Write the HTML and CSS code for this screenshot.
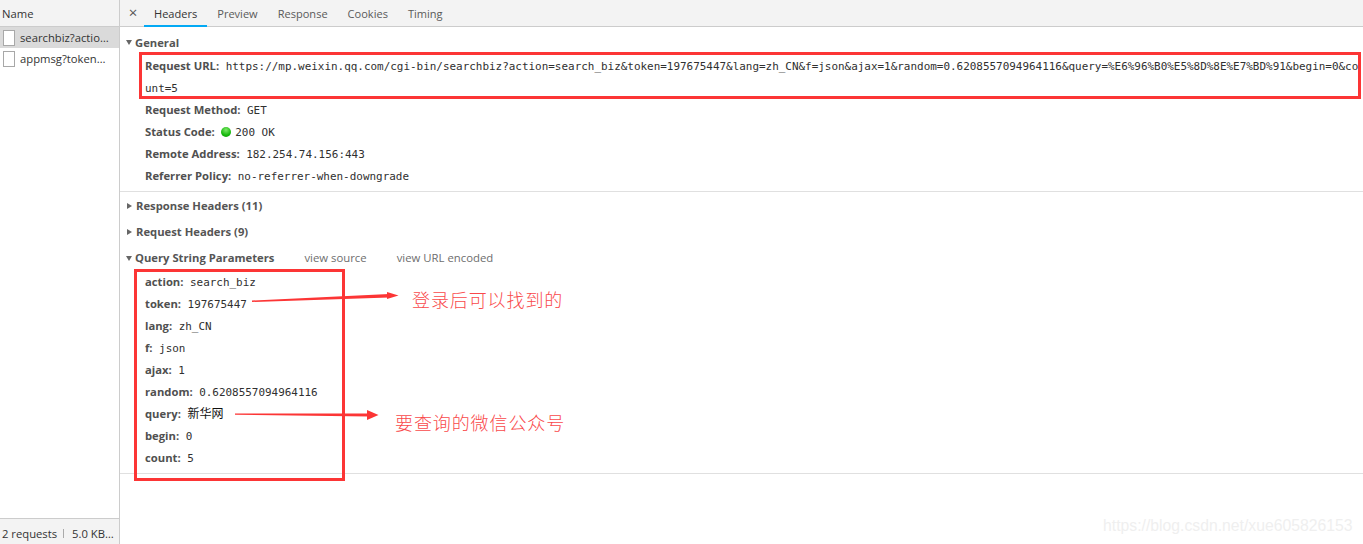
FILE: index.html
```html
<!DOCTYPE html>
<html lang="en">
<head>
<meta charset="utf-8">
<title>Network</title>
<link rel="stylesheet" href="styles.css">
</head>
<body>
<div class="app">
  <aside class="side">
    <div class="side-head">Name</div>
    <ul class="reqs">
      <li class="req sel"><span class="file"></span><span class="req-name">searchbiz?action=search_biz</span></li>
      <li class="req"><span class="file"></span><span class="req-name">appmsg?token=197675447</span></li>
    </ul>
    <div class="side-foot"><span class="foot-a">2 requests</span><span class="foot-sep"></span><span class="foot-b">5.0 KB transferred</span></div>
  </aside>
  <main class="main">
    <nav class="tabs">
      <span class="close">×</span>
      <span class="tab on">Headers</span>
      <span class="tab">Preview</span>
      <span class="tab">Response</span>
      <span class="tab">Cookies</span>
      <span class="tab">Timing</span>
    </nav>
    <section class="sec sec-general">
      <div class="sec-title"><span class="tri down"></span>General</div>
      <div class="row wrap"><b>Request URL:</b><span class="val">https://mp.weixin.qq.com/cgi-bin/searchbiz?action=search_biz&amp;token=197675447&amp;lang=zh_CN&amp;f=json&amp;ajax=1&amp;random=0.6208557094964116&amp;query=%E6%96%B0%E5%8D%8E%E7%BD%91&amp;begin=0&amp;count=5</span></div>
      <div class="row"><b>Request Method:</b><span class="val">GET</span></div>
      <div class="row"><b>Status Code:</b><span class="dot"></span><span class="val tight">200 OK</span></div>
      <div class="row"><b>Remote Address:</b><span class="val">182.254.74.156:443</span></div>
      <div class="row"><b>Referrer Policy:</b><span class="val">no-referrer-when-downgrade</span></div>
    </section>
    <section class="sec sec-query">
      <div class="sec-title tall"><span class="tri right"></span>Response Headers (11)</div>
      <div class="sec-title tall"><span class="tri right"></span>Request Headers (9)</div>
      <div class="sec-title tall"><span class="tri down"></span>Query String Parameters<span class="lnk">view source</span><span class="lnk">view URL encoded</span></div>
      <div class="row"><b>action:</b><span class="val">search_biz</span></div>
      <div class="row"><b>token:</b><span class="val">197675447</span></div>
      <div class="row"><b>lang:</b><span class="val">zh_CN</span></div>
      <div class="row"><b>f:</b><span class="val">json</span></div>
      <div class="row"><b>ajax:</b><span class="val">1</span></div>
      <div class="row"><b>random:</b><span class="val">0.6208557094964116</span></div>
      <div class="row"><b>query:</b><span class="val cjk" lang="zh-CN">新华网</span></div>
      <div class="row"><b>begin:</b><span class="val">0</span></div>
      <div class="row"><b>count:</b><span class="val">5</span></div>
    </section>
  </main>
</div>
<div class="mark box-url"></div>
<div class="mark box-params"></div>
<svg class="arrows" width="1363" height="544" viewBox="0 0 1363 544" aria-hidden="true">
  <path class="shaft" d="M252 300.5 L389 294 L389 297.5 L252 302 Z"/>
  <path class="head" d="M387 292 L398.5 295.5 L387 299 Z"/>
  <path class="shaft" d="M235 413.5 L369 413.5 L369 416.5 L235 414.8 Z"/>
  <path class="head" d="M367 410 L378.5 415 L367 420 Z"/>
</svg>
<div class="note note-a" lang="zh-CN">登录后可以找到的</div>
<div class="note note-b" lang="zh-CN">要查询的微信公众号</div>
<div class="watermark">https://blog.csdn.net/xue605826153</div>
</body>
</html>
```

FILE: styles.css
```css
* { box-sizing: border-box; }
html, body { margin: 0; height: 100%; background: #fff; overflow: hidden; }
body { font-family: "Open Sans", "Noto Sans", sans-serif; font-size: 11.25px; color: #303030; }
.app { display: flex; height: 544px; }
.side { width: 120px; flex: none; border-right: 1px solid #ccc; display: flex; flex-direction: column; }
.side-head { height: 27px; line-height: 27px; padding-left: 2px; background: #f3f3f3; border-bottom: 1px solid #ccc; color: #333; }
.reqs { list-style: none; margin: 0; padding: 0; flex: 1; }
.req { height: 21px; display: flex; align-items: center; padding: 0 8px 0 3px; }
.req.sel { background: #dadada; }
.file { width: 12px; height: 16px; flex: none; background: #fff; border: 1px solid #a8a8a8; margin-right: 5px; }
.req-name { white-space: nowrap; overflow: hidden; text-overflow: ellipsis; min-width: 0; color: #333; }
.side-foot { height: 26px; flex: none; display: flex; align-items: center; padding: 3px 4px 0 2px; background: #f3f3f3; border-top: 1px solid #ccc; white-space: nowrap; color: #333; }
.foot-a { flex: none; }
.foot-sep { width: 1px; height: 9px; flex: none; background: #aaa; margin: 0 8px 0 6px; }
.foot-b { overflow: hidden; text-overflow: ellipsis; min-width: 0; }
.main { flex: 1; min-width: 0; display: flex; flex-direction: column; }
.tabs { height: 27px; flex: none; display: flex; align-items: stretch; background: #f3f3f3; border-bottom: 1px solid #ccc; padding-left: 6px; color: #5a5a5a; font-size: 11.05px; }
.close { width: 14px; margin-right: 4px; text-align: center; font-size: 15px; line-height: 25px; color: #555; }
.tab { padding: 0 10px; line-height: 28px; }
.tab.on { color: #333; box-shadow: inset 0 -2px 0 #03a9f4; height: 27px; }
.sec { border-bottom: 1px solid #e0e0e0; padding-bottom: 4px; }
.sec-general { padding-top: 5px; }
.sec-general .sec-title { height: 23px; padding-bottom: 2px; }
.sec-query { padding-top: 1px; }
.sec-title { height: 22px; line-height: 22px; padding-left: 6px; font-weight: 700; color: #555; display: flex; align-items: center; }
.sec-title.tall { height: 26px; }
.tri { width: 0; height: 0; flex: none; margin-right: 3px; border-style: solid; border-color: transparent; }
.tri.down { border-width: 5px 3.5px 0; border-top-color: #666; }
.tri.right { border-width: 3.5px 0 3.5px 5px; border-left-color: #666; margin-left: 1px; margin-right: 4px; }
.lnk { font-weight: 400; color: #6e6e6e; margin-left: 30px; font-size: 11.35px; }
.row { line-height: 22px; height: 22px; padding-left: 25px; }
.row b { color: #505050; font-weight: 700; margin-right: 6.5px; line-height: 14px; }
.val { font-family: "DejaVu Sans Mono", "Liberation Mono", monospace; font-size: 10.95px; color: #303030; line-height: 14px; }
.val.tight { margin-left: 4px; }
.row.wrap { word-break: break-all; height: 44px; }
.cjk { font-family: "Noto Sans CJK SC", sans-serif; font-size: 12px; color: #111; }
.dot { display: inline-block; width: 10px; height: 10px; border-radius: 50%; vertical-align: -1px; background: radial-gradient(circle at 50% 30%, #7fe86a, #17b90d 60%, #0f9a08); }
.mark { position: absolute; border: 3px solid #fc3535; }
.box-url { left: 139px; top: 52px; width: 1222px; height: 47px; }
.box-params { left: 134px; top: 269px; width: 211px; height: 212px; }
.arrows { position: absolute; left: 0; top: 0; pointer-events: none; }
.shaft, .head { fill: #fc3535; }
.note { position: absolute; font-family: "Noto Sans CJK SC", sans-serif; font-size: 18px; letter-spacing: .9px; line-height: 24px; color: #f9494b; white-space: nowrap; font-weight: 300; }
.note-a { left: 412px; top: 287px; }
.note-b { left: 395px; top: 410px; }
.watermark { position: absolute; left: 1103px; top: 516px; font-family: "Liberation Sans", sans-serif; font-size: 15.75px; line-height: 20px; color: #efefef; white-space: nowrap; }
```
